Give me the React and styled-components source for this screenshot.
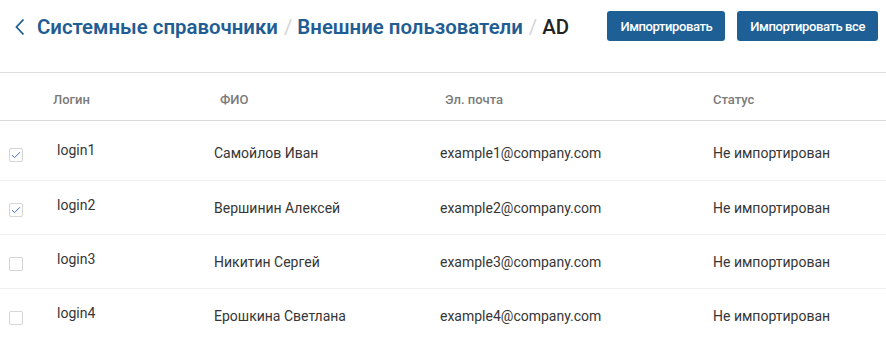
import styled, { createGlobalStyle } from 'styled-components';

const GlobalStyle = createGlobalStyle`
  body {
    margin: 0;
    background: #fff;
    font-family: Roboto, "Liberation Sans", sans-serif;
    color: #333;
  }
`;

const Page = styled.div`
  width: 886px;
  height: 341px;
  overflow: hidden;
`;

const TopBar = styled.header`
  height: 73px;
  display: flex;
  align-items: flex-start;
  justify-content: space-between;
  padding: 0 8px 0 14px;
  box-sizing: border-box;
  border-bottom: 1px solid #dedede;
`;

const Crumbs = styled.nav`
  display: flex;
  align-items: center;
  height: 54px;
  font-size: 20.4px;
  font-weight: 600;
`;

const Back = styled.span`
  display: flex;
  align-items: center;
  margin-right: 11px;
  color: #1f5d93;
`;

const Crumb = styled.span`
  color: ${(p) => (p.current ? '#222' : '#1f5d93')};
  font-weight: ${(p) => (p.current ? 500 : 600)};
`;

const Slash = styled.span`
  color: #d4d4d4;
  font-weight: 400;
  margin: 0 5px 0 6px;
`;

const Actions = styled.div`
  display: flex;
  gap: 12px;
  padding-top: 11px;
`;

const Button = styled.button`
  height: 30px;
  padding: 0 13px;
  border: none;
  border-radius: 3px;
  background: #1e5f96;
  color: #fff;
  font-family: Roboto, "Liberation Sans", sans-serif;
  font-size: 13px;
  font-weight: 500;
  letter-spacing: -0.4px;
  cursor: pointer;
`;

const Grid = styled.div`
  display: grid;
  grid-template-columns: 48px 162px 226px 273px 1fr;
`;

const HeadRow = styled(Grid)`
  height: 47px;
  align-items: center;
  border-bottom: 1px solid #d9d9d9;
`;

const HeadCell = styled.div`
  padding-left: ${(p) => p.pad}px;
  font-size: 13px;
  font-weight: 500;
  color: #7a7a7a;
  padding-top: 5px;
`;

const Row = styled(Grid)`
  height: ${(p) => p.h}px;
  box-sizing: border-box;
  padding-top: ${(p) => p.top}px;
  border-bottom: 1px solid #efefef;
  font-size: 14px;
  color: #363636;
`;

const CheckCell = styled.div`
  padding-left: 9px;
  padding-top: 6px;
`;

const Box = styled.span`
  display: flex;
  align-items: center;
  justify-content: center;
  width: 14px;
  height: 14px;
  border: 1px solid #d6d6d6;
  border-radius: 2px;
  box-sizing: border-box;
  background: #fff;
`;

const Login = styled.div`
  padding-left: 9px;
`;

const Cell = styled.div`
  padding-left: 4px;
  padding-top: 3px;
`;

const users = [
  { login: 'login1', name: 'Самойлов Иван', email: 'example1@company.com', checked: true },
  { login: 'login2', name: 'Вершинин Алексей', email: 'example2@company.com', checked: true },
  { login: 'login3', name: 'Никитин Сергей', email: 'example3@company.com', checked: false },
  { login: 'login4', name: 'Ерошкина Светлана', email: 'example4@company.com', checked: false },
];

const Check = () => (
  <svg width="10" height="8" viewBox="0 0 10 8" fill="none">
    <path d="M1 4.2 L3.6 6.6 L9 1.2" stroke="#3b6fc4" strokeWidth="1" />
  </svg>
);

export default function App() {
  return (
    <Page>
      <GlobalStyle />
      <TopBar>
        <Crumbs>
          <Back>
            <svg width="12" height="18" viewBox="0 0 12 18" fill="none">
              <path d="M9.5 1.5 L2.5 9 L9.5 16.5" stroke="#1f5d93" strokeWidth="1.8" />
            </svg>
          </Back>
          <Crumb>Системные справочники</Crumb>
          <Slash>/</Slash>
          <Crumb>Внешние пользователи</Crumb>
          <Slash>/</Slash>
          <Crumb current>AD</Crumb>
        </Crumbs>
        <Actions>
          <Button>Импортировать</Button>
          <Button>Импортировать все</Button>
        </Actions>
      </TopBar>
      <HeadRow>
        <div />
        <HeadCell pad={5}>Логин</HeadCell>
        <HeadCell pad={10}>ФИО</HeadCell>
        <HeadCell pad={9}>Эл. почта</HeadCell>
        <HeadCell pad={4}>Статус</HeadCell>
      </HeadRow>
      {users.map((u, i) => (
        <Row key={u.login} h={i === 0 ? 60 : 54} top={i === 0 ? 21 : 16}>
          <CheckCell>
            <Box>{u.checked && <Check />}</Box>
          </CheckCell>
          <Login>{u.login}</Login>
          <Cell>{u.name}</Cell>
          <Cell>{u.email}</Cell>
          <Cell>Не импортирован</Cell>
        </Row>
      ))}
    </Page>
  );
}
